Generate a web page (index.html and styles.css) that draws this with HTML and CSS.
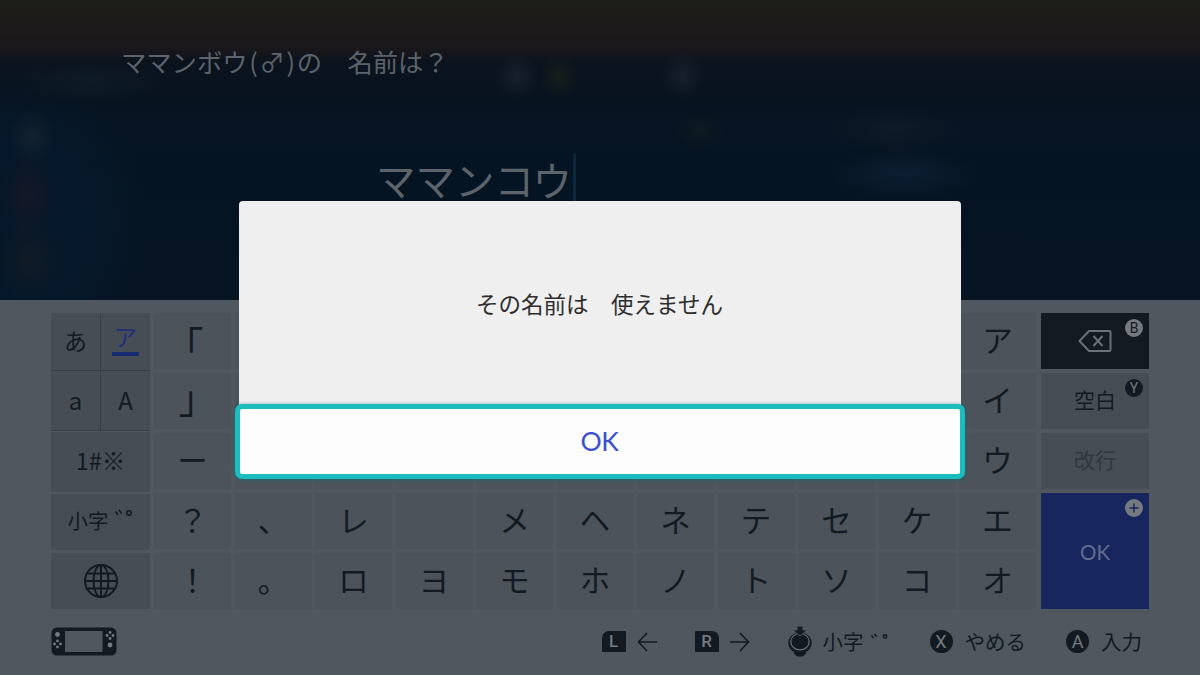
FILE: index.html
```html
<!DOCTYPE html>
<html lang="ja">
<head>
    <meta charset="UTF-8" />
    <meta name="viewport" content="width=device-width, initial-scale=1" />
    <title>名前は？</title>
    <link rel="stylesheet" href="styles.css">
</head>
<body>
    <header class="entry">
        <h1 class="prompt">ママンボウ<span class="paren">(</span>♂<span class="paren">)</span>の　名前は？</h1>
        <div class="name-field"><span>ママンコウ</span><i class="cursor"></i></div>
    </header>

    <main class="keyboard">
        <div class="modes">
            <div class="pair">
                <div class="mode">あ</div>
                <div class="mode active"><span>ア</span></div>
                <div class="mode">a</div>
                <div class="mode">A</div>
            </div>
            <div class="mode symbols">1#※</div>
            <div class="mode small-kana">小字<svg class="marks" width="20" height="10" viewBox="0 0 20 10"><path d="M1.5 2.5l2.500 3.500M5 1l2.500 3.500"/><circle cx="15" cy="4" r="2.200"/></svg></div>
            <div class="mode">
                <svg class="globe" width="36" height="36" viewBox="0 0 36 36">
                    <circle cx="18" cy="18" r="16"/>
                    <ellipse cx="18" cy="18" rx="7.5" ry="16"/>
                    <path d="M18 2v32M2 18h32M5 10.500h26M5 25.500h26"/>
                </svg>
            </div>
        </div>

        <div class="keys">
            <div class="key bracket open">「</div><div class="key"></div><div class="key"></div><div class="key"></div><div class="key"></div><div class="key"></div><div class="key"></div><div class="key"></div><div class="key"></div><div class="key"></div><div class="key">ア</div>
            <div class="key bracket close">」</div><div class="key"></div><div class="key"></div><div class="key"></div><div class="key"></div><div class="key"></div><div class="key"></div><div class="key"></div><div class="key"></div><div class="key"></div><div class="key">イ</div>
            <div class="key">ー</div><div class="key"></div><div class="key"></div><div class="key"></div><div class="key"></div><div class="key"></div><div class="key"></div><div class="key"></div><div class="key"></div><div class="key"></div><div class="key">ウ</div>
            <div class="key">？</div><div class="key">、</div><div class="key">レ</div><div class="key"></div><div class="key">メ</div><div class="key">ヘ</div><div class="key">ネ</div><div class="key">テ</div><div class="key">セ</div><div class="key">ケ</div><div class="key">エ</div>
            <div class="key">！</div><div class="key">。</div><div class="key">ロ</div><div class="key">ヨ</div><div class="key">モ</div><div class="key">ホ</div><div class="key">ノ</div><div class="key">ト</div><div class="key">ソ</div><div class="key">コ</div><div class="key">オ</div>
        </div>

        <div class="actions">
            <div class="action delete">
                <svg width="34" height="24" viewBox="0 0 34 24"><path d="M11 2h20.500q1 0 1 1v18q0 1-1 1H11L1.500 12z"/><path d="M15.500 7l9 10M24.500 7l-9 10"/></svg>
                <span class="hint light">B</span>
            </div>
            <div class="action">空白<span class="hint">Y</span></div>
            <div class="action disabled">改行</div>
            <div class="action ok">OK<span class="hint light"><svg width="12" height="12" viewBox="0 0 12 12"><path d="M6 1.500v9M1.500 6h9"/></svg></span></div>
        </div>
    </main>

    <footer class="guide">
        <svg class="console" width="66" height="29" viewBox="0 0 66 29">
            <rect x=".5" y=".5" width="65" height="28" rx="5.500" fill="#131a22"/>
            <rect x="14" y="4" width="37.500" height="21" fill="#50575f"/>
            <g fill="#747a80">
                <circle cx="6.500" cy="7.500" r="2.400"/>
                <circle cx="59" cy="18" r="2.400"/>
                <circle cx="6.500" cy="14" r="1.400"/><circle cx="3.500" cy="17" r="1.400"/><circle cx="9.500" cy="17" r="1.400"/><circle cx="6.500" cy="20" r="1.400"/>
                <circle cx="59" cy="5.500" r="1.400"/><circle cx="56" cy="8.500" r="1.400"/><circle cx="62" cy="8.500" r="1.400"/><circle cx="59" cy="11.500" r="1.400"/>
            </g>
        </svg>
        <div class="help shoulder">
            <span class="bumper left">L</span>
            <svg class="arrow" width="20" height="20" viewBox="0 0 20 20"><path d="M20 10H1.500M10 1L1.500 10l8.500 9"/></svg>
        </div>
        <div class="help shoulder">
            <span class="bumper right">R</span>
            <svg class="arrow" width="20" height="20" viewBox="0 0 20 20"><path d="M0 10h18.500M10 1l8.500 9-8.500 9"/></svg>
        </div>
        <div class="help stick">
            <svg width="24" height="31" viewBox="0 0 24 31">
                <path fill="#131a22" d="M6 24h12v3.500l-3 3H9l-3-3z"/>
                <ellipse cx="12" cy="17" rx="11.700" ry="10.500" fill="#131a22"/>
                <ellipse cx="12" cy="15.700" rx="9.200" ry="8.200" fill="#131a22" stroke="#6b7178" stroke-width="1.200"/>
                <path fill="#131a22" stroke="#50575f" stroke-width="1" d="M9 0h6v4h4.500L12 10 4.500 4H9z"/>
            </svg>
            <span>小字</span><svg class="marks" width="20" height="10" viewBox="0 0 20 10"><path d="M1.500 2.500l2 2.500M4.500 1l2 2.500"/><circle cx="15" cy="3.500" r="1.700"/></svg>
        </div>
        <div class="help"><span class="button">X</span>やめる</div>
        <div class="help"><span class="button">A</span>入力</div>
    </footer>

    <div class="dialog">
        <p class="message">その名前は　使えません</p>
        <button class="confirm">OK</button>
    </div>
</body>
</html>
```
FILE: styles.css
```css
* {
    box-sizing: border-box;
}
body {
    margin: 0;
    width: 1200px;
    height: 675px;
    overflow: hidden;
    position: relative;
    background: #50575f;
    color: #131a22;
    font-family: "Noto Sans CJK JP", sans-serif;
    font-weight: 400;
}
svg {
    display: block;
    flex: none;
}

/* blurred game screen behind the name entry */
.entry {
    height: 300px;
    padding: 43px 0 0 121px;
    color: #5c636b;
    background:
        radial-gradient(ellipse 22px 24px at 517px 76px, #1b242dcc, #1b242d00),
        radial-gradient(ellipse 20px 22px at 559px 76px, #1b2119cc, #1b211900),
        radial-gradient(ellipse 22px 24px at 683px 75px, #1b242dcc, #1b242d00),
        radial-gradient(ellipse 75px 22px at 90px 82px, #111f26aa, #111f2600),
        radial-gradient(ellipse 25px 28px at 32px 137px, #162431cc, #16243100),
        radial-gradient(ellipse 28px 45px at 28px 195px, #1d1624aa, #1d162400),
        radial-gradient(ellipse 34px 42px at 30px 260px, #131b25cc, #131b2500),
        radial-gradient(ellipse 28px 20px at 700px 130px, #101b1ecc, #101b1e00),
        radial-gradient(ellipse 70px 24px at 893px 130px, #0f1c28cc, #0f1c2800),
        radial-gradient(ellipse 76px 26px at 904px 174px, #0e2034cc, #0e203400),
        radial-gradient(ellipse 130px 150px at 20px 220px, #05192bcc 50%, #05192b00),
        linear-gradient(#1e1e19 0, #1c1a1a 28px, #1a171a 48px, #0b131e 63px, #07131f 100px, #061423 125px, #051422 160px, #061423 300px);
}
.prompt {
    margin: 0;
    font-size: 25.3px;
    line-height: 36px;
    font-weight: 400;
    white-space: nowrap;
}
.paren {
    display: inline-block;
    width: 12px;
    text-align: center;
}
.name-field {
    display: flex;
    align-items: flex-start;
    margin: 72px 0 0 255px;
    height: 56px;
    font-size: 39.5px;
    line-height: 56px;
}
.cursor {
    width: 3px;
    height: 56px;
    margin: 3px 0 0 1px;
    background: #0c283a;
}

.keyboard {
    display: flex;
    height: 309px;
    padding: 13px 51px 0;
}
.modes {
    width: 99px;
    margin-right: 4px;
    display: grid;
    grid-template-rows: 118px 58px 56px 56px;
    align-content: space-between;
    height: 296px;
}
.pair {
    display: grid;
    grid-template-columns: 49px 49px;
    grid-template-rows: 57px 59px;
    gap: 1px;
    background: #393f47;
}
.mode {
    display: flex;
    align-items: center;
    justify-content: center;
    background: #464d55;
    font-size: 23px;
    line-height: 1;
}
.pair .mode {
    padding-bottom: 3px;
}
.pair .mode:nth-child(n+3) {
    padding-bottom: 1px;
    font-size: 24px;
}
.symbols {
    margin-top: -2px;
    padding-bottom: 1px;
    font-size: 23.5px;
}
.pair .active {
    padding: 0;
}
.active span {
    display: block;
    width: 27px;
    height: 31px;
    margin-top: -2px;
    line-height: 22px;
    text-align: center;
    color: #1f3077;
    border-bottom: 4px solid #182a70;
}
.small-kana {
    padding-bottom: 4px;
    font-size: 20.5px;
}
.marks {
    align-self: flex-start;
    margin: 15px 0 0 5px;
    fill: none;
    stroke: #131a22;
    stroke-width: 1.5;
}
.globe {
    fill: none;
    stroke: #131a22;
    stroke-width: 2;
}
.keys {
    width: 882px;
    margin-right: 5px;
    display: grid;
    grid-template-columns: repeat(11, 77px);
    grid-auto-rows: 56px;
    gap: 4px 3.5px;
}
.key {
    display: flex;
    align-items: center;
    justify-content: center;
    padding-bottom: 4px;
    background: #4c535b;
    font-size: 30.5px;
    line-height: 1;
}
.bracket {
    font-size: 39px;
}
.open {
    padding: 4px 17px 0 0;
}
.close {
    padding: 0 0 10px 11px;
}
.actions {
    width: 108px;
    display: grid;
    grid-template-rows: 56px 56px 56px 116px;
    gap: 4px;
}
.action {
    position: relative;
    display: flex;
    align-items: center;
    justify-content: center;
    padding-bottom: 3px;
    background: #464d55;
    font-size: 21px;
    line-height: 1;
}
.action.delete {
    padding: 0;
    background: #131a22;
}
.delete svg {
    fill: none;
    stroke: #6b7178;
    stroke-width: 2;
}
.action.disabled {
    color: #30373f;
}
.action.ok {
    padding: 2px 0 0;
    background: #17265f;
    color: #646d8c;
    font-family: Lato, sans-serif;
    font-weight: 400;
    font-size: 20.5px;
}
.hint {
    position: absolute;
    top: 6px;
    right: 6px;
    width: 18px;
    height: 18px;
    border-radius: 50%;
    display: flex;
    align-items: center;
    justify-content: center;
    background: #131a22;
    color: #747a80;
    font: 400 14px/1 Roboto, sans-serif;
}
.hint.light {
    background: #747a80;
    color: #131a22;
}
.hint svg {
    stroke: #17265f;
    stroke-width: 1.5;
}

.guide {
    display: flex;
    align-items: center;
    height: 65px;
    padding: 0 58px 0 51px;
    font-size: 20.5px;
    line-height: 1;
}
.console {
    margin-right: auto;
}
.help {
    display: flex;
    align-items: center;
    margin-left: 40px;
}
.shoulder {
    margin-left: 38px;
}
.bumper {
    width: 24px;
    height: 21px;
    margin-right: 11px;
    background: #131a22;
    color: #747a80;
    font: 500 17px/21px Roboto, sans-serif;
    text-align: center;
}
.bumper.left {
    border-radius: 7px 1px 1px 1px;
}
.bumper.right {
    border-radius: 1px 7px 1px 1px;
}
.arrow {
    fill: none;
    stroke: #131a22;
    stroke-width: 1.6;
}
.stick {
    margin-left: 38px;
}
.stick span {
    margin-left: 11px;
}
.stick .marks {
    margin: 7px 0 0 6px;
}
.button {
    width: 23px;
    height: 23px;
    margin-right: 12px;
    border-radius: 50%;
    background: #131a22;
    color: #747a80;
    font: 400 18px/24px Roboto, sans-serif;
    text-align: center;
}

.dialog {
    position: absolute;
    left: 239px;
    top: 201px;
    width: 722px;
    height: 273px;
    display: flex;
    flex-direction: column;
    border-radius: 4px;
    background: #efefef;
    color: #2d2d2d;
}
.message {
    flex: 1;
    display: flex;
    align-items: center;
    justify-content: center;
    margin: 0;
    padding: 2px 1px 0 0;
    font-size: 22.5px;
    line-height: 1;
}
.confirm {
    height: 75px;
    margin: 0 -4px -5px;
    padding: 0 1px 1px 0;
    border: 5px solid #1bbcbe;
    border-radius: 7px;
    background: #fdfdfd;
    box-shadow: 0 1px 4px rgba(20, 110, 115, 0.7);
    color: #3a50d0;
    font: 400 26.5px/1 Lato, sans-serif;
    letter-spacing: -0.5px;
}
```
